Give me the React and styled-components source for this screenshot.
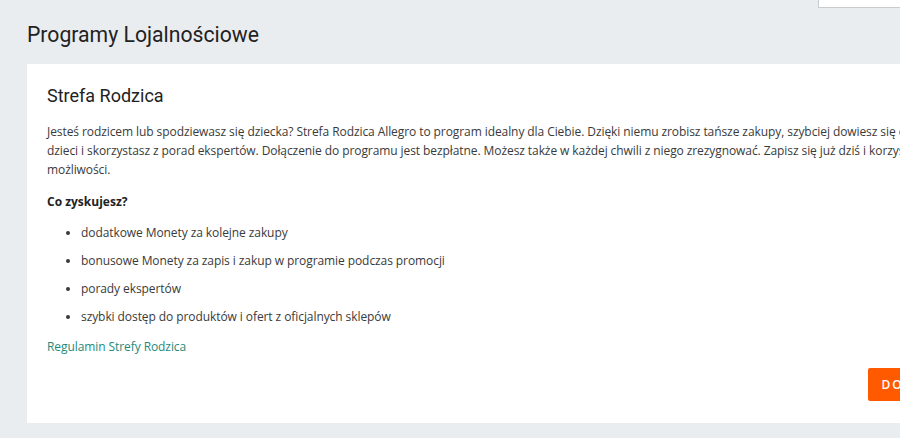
import React from 'react';
import styled, { createGlobalStyle } from 'styled-components';

const GlobalStyle = createGlobalStyle`
  html, body {
    margin: 0;
    padding: 0;
    overflow: hidden;
    background: #eaedf0;
  }
  body {
    font-family: 'Open Sans', 'Liberation Sans', sans-serif;
  }
`;

const Page = styled.div`
  width: 1065px;
  padding: 0 0 16px 27px;
`;

const TopBar = styled.div`
  display: flex;
  height: 8px;
  padding-left: 791px;
`;

const SearchBox = styled.div`
  width: 120px;
  height: 7px;
  background: #fff;
  border: 1px solid #c9cbcd;
  border-top: none;
`;

const PageTitle = styled.h1`
  margin: 15px 0 17px;
  font-family: Roboto, 'Liberation Sans', sans-serif;
  font-weight: 400;
  font-size: 21.2px;
  line-height: 24px;
  color: #222;
`;

const Card = styled.section`
  background: #fff;
  padding: 20px 20px 22px;
  display: flex;
  flex-direction: column;
`;

const CardTitle = styled.h2`
  margin: 0 0 14px;
  font-family: Roboto, 'Liberation Sans', sans-serif;
  font-weight: 400;
  font-size: 18px;
  line-height: 24px;
  color: #222;
`;

const Text = styled.p`
  margin: 0;
  font-size: 12px;
  line-height: 19px;
  letter-spacing: -0.08px;
  color: #3a3a3a;
`;

const Subheading = styled.p`
  margin: 13px 0 8px;
  font-size: 12px;
  line-height: 19px;
  font-weight: 700;
  color: #222;
`;

const List = styled.ul`
  margin: 0;
  padding-left: 34px;
  list-style: disc;
`;

const Item = styled.li`
  font-size: 12px;
  line-height: 28px;
  letter-spacing: -0.08px;
  color: #3a3a3a;
`;

const Link = styled.a`
  margin-top: 6px;
  font-size: 12px;
  line-height: 19px;
  letter-spacing: -0.08px;
  color: #1f8a7a;
  text-decoration: none;
  align-self: flex-start;
`;

const Actions = styled.div`
  display: flex;
  justify-content: flex-end;
  margin-top: 12px;
`;

const JoinButton = styled.button`
  height: 33px;
  padding: 0 14px;
  background: #ff5a00;
  border: none;
  border-radius: 2px;
  color: #fff;
  font-family: 'Open Sans', 'Liberation Sans', sans-serif;
  font-size: 12px;
  font-weight: 600;
  letter-spacing: 2px;
`;

const benefits = [
  'dodatkowe Monety za kolejne zakupy',
  'bonusowe Monety za zapis i zakup w programie podczas promocji',
  'porady ekspertów',
  'szybki dostęp do produktów i ofert z oficjalnych sklepów',
];

export default function App() {
  return (
    <>
      <GlobalStyle />
      <Page>
        <TopBar>
          <SearchBox />
        </TopBar>
        <PageTitle>Programy Lojalnościowe</PageTitle>
        <Card>
          <CardTitle>Strefa Rodzica</CardTitle>
          <Text>
            Jesteś rodzicem lub spodziewasz się dziecka? Strefa Rodzica Allegro to program idealny dla
            Ciebie. Dzięki niemu zrobisz tańsze zakupy, szybciej dowiesz się o najnowszych produktach
            dla dzieci i skorzystasz z porad ekspertów. Dołączenie do programu jest bezpłatne. Możesz
            także w każdej chwili z niego zrezygnować. Zapisz się już dziś i korzystaj ze wszystkich
            jego możliwości.
          </Text>
          <Subheading>Co zyskujesz?</Subheading>
          <List>
            {benefits.map((b) => (
              <Item key={b}>{b}</Item>
            ))}
          </List>
          <Link href="#">Regulamin Strefy Rodzica</Link>
          <Actions>
            <JoinButton>DOŁĄCZ DO PROGRAMU</JoinButton>
          </Actions>
        </Card>
      </Page>
    </>
  );
}
